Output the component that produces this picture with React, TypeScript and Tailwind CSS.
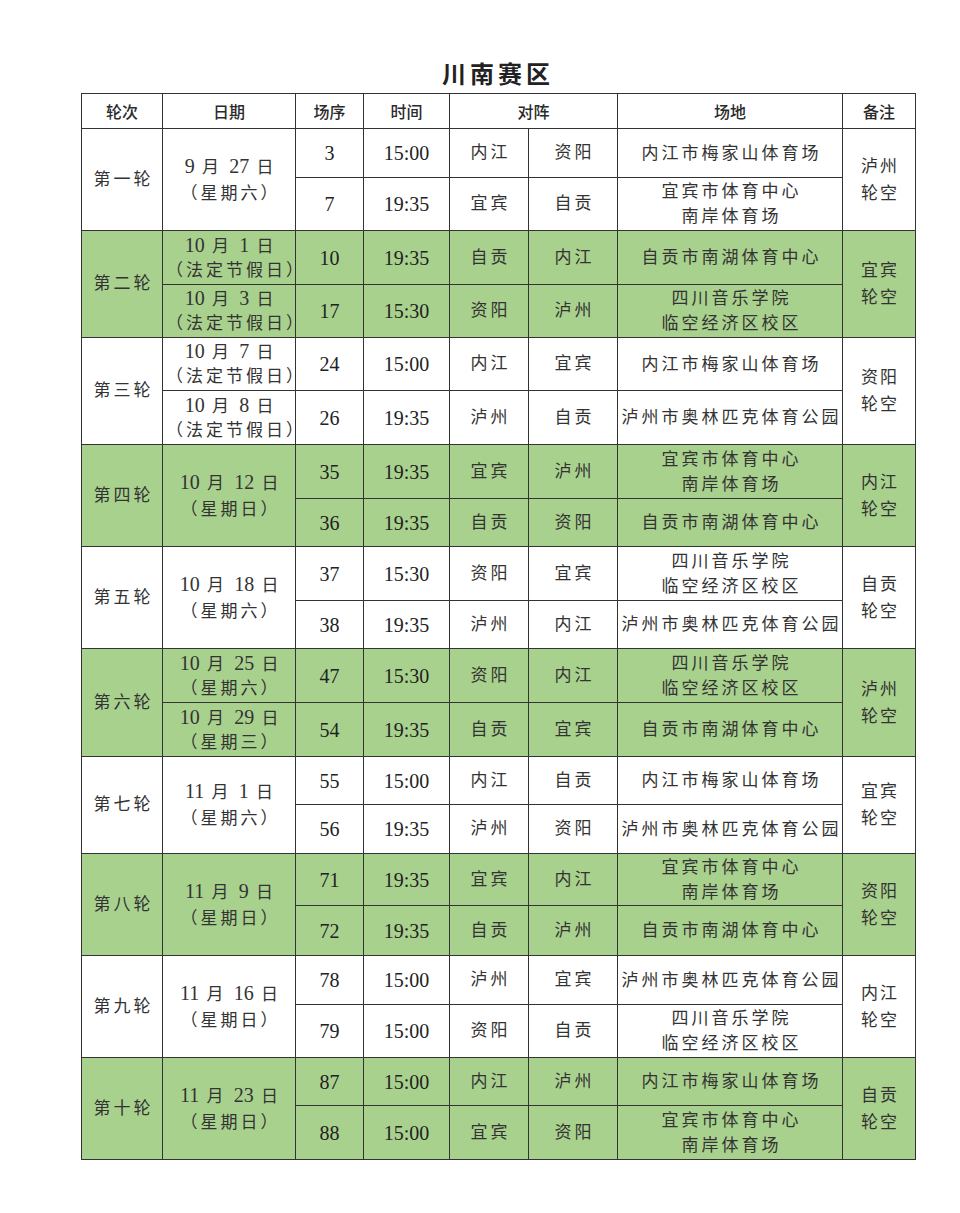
import React from "react";

type Match = {
  no: string;
  time: string;
  a: string;
  b: string;
  venue: string[];
  date?: string[];
};

type Round = {
  label: string;
  green: boolean;
  date?: string[];
  note: string[];
  matches: [Match, Match];
  heights: [number, number];
};

const MEI = ["内江市梅家山体育场"];
const YB = ["宜宾市体育中心", "南岸体育场"];
const NH = ["自贡市南湖体育中心"];
const SC = ["四川音乐学院", "临空经济区校区"];
const AL = ["泸州市奥林匹克体育公园"];

const rounds: Round[] = [
  {
    label: "第一轮",
    green: false,
    date: ["9 月 27 日", "（星期六）"],
    note: ["泸州", "轮空"],
    heights: [49, 53],
    matches: [
      { no: "3", time: "15:00", a: "内江", b: "资阳", venue: MEI },
      { no: "7", time: "19:35", a: "宜宾", b: "自贡", venue: YB },
    ],
  },
  {
    label: "第二轮",
    green: true,
    note: ["宜宾", "轮空"],
    heights: [54, 53],
    matches: [
      { no: "10", time: "19:35", a: "自贡", b: "内江", venue: NH, date: ["10 月 1 日", "（法定节假日）"] },
      { no: "17", time: "15:30", a: "资阳", b: "泸州", venue: SC, date: ["10 月 3 日", "（法定节假日）"] },
    ],
  },
  {
    label: "第三轮",
    green: false,
    note: ["资阳", "轮空"],
    heights: [53, 54],
    matches: [
      { no: "24", time: "15:00", a: "内江", b: "宜宾", venue: MEI, date: ["10 月 7 日", "（法定节假日）"] },
      { no: "26", time: "19:35", a: "泸州", b: "自贡", venue: AL, date: ["10 月 8 日", "（法定节假日）"] },
    ],
  },
  {
    label: "第四轮",
    green: true,
    date: ["10 月 12 日", "（星期日）"],
    note: ["内江", "轮空"],
    heights: [54, 48],
    matches: [
      { no: "35", time: "19:35", a: "宜宾", b: "泸州", venue: YB },
      { no: "36", time: "19:35", a: "自贡", b: "资阳", venue: NH },
    ],
  },
  {
    label: "第五轮",
    green: false,
    date: ["10 月 18 日", "（星期六）"],
    note: ["自贡", "轮空"],
    heights: [54, 48],
    matches: [
      { no: "37", time: "15:30", a: "资阳", b: "宜宾", venue: SC },
      { no: "38", time: "19:35", a: "泸州", b: "内江", venue: AL },
    ],
  },
  {
    label: "第六轮",
    green: true,
    note: ["泸州", "轮空"],
    heights: [54, 54],
    matches: [
      { no: "47", time: "15:30", a: "资阳", b: "内江", venue: SC, date: ["10 月 25 日", "（星期六）"] },
      { no: "54", time: "19:35", a: "自贡", b: "宜宾", venue: NH, date: ["10 月 29 日", "（星期三）"] },
    ],
  },
  {
    label: "第七轮",
    green: false,
    date: ["11 月 1 日", "（星期六）"],
    note: ["宜宾", "轮空"],
    heights: [48, 49],
    matches: [
      { no: "55", time: "15:00", a: "内江", b: "自贡", venue: MEI },
      { no: "56", time: "19:35", a: "泸州", b: "资阳", venue: AL },
    ],
  },
  {
    label: "第八轮",
    green: true,
    date: ["11 月 9 日", "（星期日）"],
    note: ["资阳", "轮空"],
    heights: [52, 50],
    matches: [
      { no: "71", time: "19:35", a: "宜宾", b: "内江", venue: YB },
      { no: "72", time: "19:35", a: "自贡", b: "泸州", venue: NH },
    ],
  },
  {
    label: "第九轮",
    green: false,
    date: ["11 月 16 日", "（星期日）"],
    note: ["内江", "轮空"],
    heights: [49, 53],
    matches: [
      { no: "78", time: "15:00", a: "泸州", b: "宜宾", venue: AL },
      { no: "79", time: "15:00", a: "资阳", b: "自贡", venue: SC },
    ],
  },
  {
    label: "第十轮",
    green: true,
    date: ["11 月 23 日", "（星期日）"],
    note: ["自贡", "轮空"],
    heights: [48, 54],
    matches: [
      { no: "87", time: "15:00", a: "内江", b: "泸州", venue: MEI },
      { no: "88", time: "15:00", a: "宜宾", b: "资阳", venue: YB },
    ],
  },
];

const cell = "border-[1.5px] border-[#333333] p-0 text-center align-middle";

function Mixed({ text }: { text: string }) {
  const parts = text.split(/(\d+)/);
  return (
    <>
      {parts.map((p, i) =>
        /^\d+$/.test(p) ? (
          <span key={i} className="text-[20px] tracking-normal">
            {p}
          </span>
        ) : (
          <span key={i}>{p}</span>
        )
      )}
    </>
  );
}

function DateCell({ lines, rowSpan }: { lines: string[]; rowSpan?: number }) {
  return (
    <td
      rowSpan={rowSpan}
      className={`${cell} text-[17px] tracking-[3px] ${rowSpan ? "leading-[26px]" : "leading-[24px]"}`}
    >
      {lines.map((l, i) => (
        <div key={i} className="whitespace-nowrap pl-[3px]">
          <Mixed text={l} />
        </div>
      ))}
    </td>
  );
}

export default function App() {
  return (
    <div className="min-h-[1213px] w-[960px] bg-white pt-[58px] text-[#333333] font-['Liberation_Serif','Noto_Sans_CJK_SC',serif]">
      <div className="ml-[81px] w-[834px] h-[30px] text-center text-[24px] leading-[30px] font-bold tracking-[4px] text-[#222222] font-['Noto_Sans_CJK_SC',sans-serif]">
        川南赛区
      </div>
      <table className="ml-[81px] mt-[5px] w-[834px] table-fixed border-collapse">
        <colgroup>
          <col className="w-[81px]" />
          <col className="w-[133px]" />
          <col className="w-[68px]" />
          <col className="w-[86px]" />
          <col className="w-[79px]" />
          <col className="w-[89px]" />
          <col className="w-[225px]" />
          <col className="w-[73px]" />
        </colgroup>
        <thead>
          <tr className="h-[35px] text-[16px] text-[#2a2a2a] font-['Noto_Sans_CJK_SC',sans-serif]">
            <th className={`${cell} font-medium`}>轮次</th>
            <th className={`${cell} font-medium`}>日期</th>
            <th className={`${cell} font-medium`}>场序</th>
            <th className={`${cell} font-medium`}>时间</th>
            <th colSpan={2} className={`${cell} font-medium`}>对阵</th>
            <th className={`${cell} font-medium`}>场地</th>
            <th className={`${cell} font-medium`}>备注</th>
          </tr>
        </thead>
        <tbody>
          {rounds.map((r) =>
            r.matches.map((m, idx) => (
              <tr
                key={r.label + idx}
                className={r.green ? "bg-[#a9d18e]" : "bg-white"}
                style={{ height: r.heights[idx] }}
              >
                {idx === 0 && (
                  <td rowSpan={2} className={`${cell} text-[17px] tracking-[3px]`}>
                    <span className="pl-[3px]">{r.label}</span>
                  </td>
                )}
                {r.date ? (
                  idx === 0 && <DateCell lines={r.date} rowSpan={2} />
                ) : (
                  <DateCell lines={m.date ?? []} />
                )}
                <td className={`${cell} text-[20px] text-[#222222]`}>{m.no}</td>
                <td className={`${cell} text-[20px] text-[#222222]`}>{m.time}</td>
                <td className={`${cell} text-[17px] tracking-[3px]`}>
                  <span className="pl-[3px]">{m.a}</span>
                </td>
                <td className={`${cell} text-[17px] tracking-[3px]`}>
                  <span className="pl-[3px]">{m.b}</span>
                </td>
                <td className={`${cell} text-[17px] leading-[25px] tracking-[3px]`}>
                  {m.venue.map((v, i) => (
                    <div key={i} className="whitespace-nowrap pl-[3px]">
                      {v}
                    </div>
                  ))}
                </td>
                {idx === 0 && (
                  <td rowSpan={2} className={`${cell} text-[17px] leading-[27px] tracking-[2px]`}>
                    {r.note.map((n, i) => (
                      <div key={i} className="pl-[2px]">
                        {n}
                      </div>
                    ))}
                  </td>
                )}
              </tr>
            ))
          )}
        </tbody>
      </table>
    </div>
  );
}
